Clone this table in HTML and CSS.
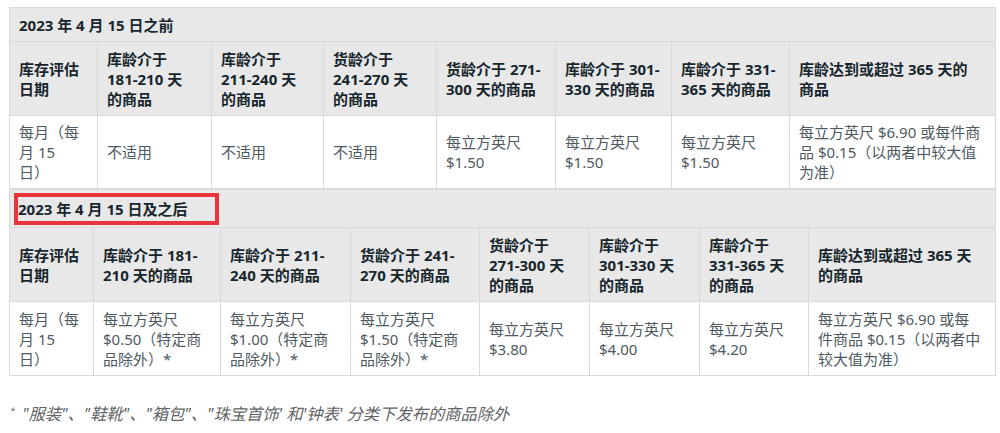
FILE: index.html
```html
<!DOCTYPE html>
<html lang="zh-CN">
<head>
<meta charset="utf-8">
<title>库存仓储超龄附加费</title>
<link rel="stylesheet" href="styles.css">
</head>
<body>
<div class="page">
  <table class="fee t1">
    <colgroup>
      <col class="a1"><col class="a2"><col class="a3"><col class="a4"><col class="a5"><col class="a6"><col class="a7"><col class="a8">
    </colgroup>
    <tr class="title-row"><th colspan="8">2023 年 4 月 15 日之前</th></tr>
    <tr class="head-row">
      <th>库存评估<br>日期</th>
      <th>库龄介于<br>181-210 天<br>的商品</th>
      <th>库龄介于<br>211-240 天<br>的商品</th>
      <th>货龄介于<br>241-270 天<br>的商品</th>
      <th>货龄介于 271-<br>300 天的商品</th>
      <th>库龄介于 301-<br>330 天的商品</th>
      <th>库龄介于 331-<br>365 天的商品</th>
      <th>库龄达到或超过 365 天的<br>商品</th>
    </tr>
    <tr class="body-row">
      <td>每月（每<br>月 15<br>日）</td>
      <td>不适用</td>
      <td>不适用</td>
      <td>不适用</td>
      <td>每立方英尺<br>$1.50</td>
      <td>每立方英尺<br>$1.50</td>
      <td>每立方英尺<br>$1.50</td>
      <td>每立方英尺 $6.90 或每件商<br>品 $0.15（以两者中较大值<br>为准）</td>
    </tr>
  </table>
  <table class="fee t2">
    <colgroup>
      <col class="b1"><col class="b2"><col class="b3"><col class="b4"><col class="b5"><col class="b6"><col class="b7"><col class="b8">
    </colgroup>
    <tr class="title-row2"><th colspan="8"><span class="mark">2023 年 4 月 15 日及之后</span></th></tr>
    <tr class="head-row">
      <th>库存评估<br>日期</th>
      <th>库龄介于 181-<br>210 天的商品</th>
      <th>库龄介于 211-<br>240 天的商品</th>
      <th>货龄介于 241-<br>270 天的商品</th>
      <th>货龄介于<br>271-300 天<br>的商品</th>
      <th>库龄介于<br>301-330 天<br>的商品</th>
      <th>库龄介于<br>331-365 天<br>的商品</th>
      <th>库龄达到或超过 365 天<br>的商品</th>
    </tr>
    <tr class="body-row2">
      <td>每月（每<br>月 15<br>日）</td>
      <td>每立方英尺<br>$0.50（特定商<br>品除外）*</td>
      <td>每立方英尺<br>$1.00（特定商<br>品除外）*</td>
      <td>每立方英尺<br>$1.50（特定商<br>品除外）*</td>
      <td>每立方英尺<br>$3.80</td>
      <td>每立方英尺<br>$4.00</td>
      <td>每立方英尺<br>$4.20</td>
      <td>每立方英尺 $6.90 或每<br>件商品 $0.15（以两者中<br>较大值为准）</td>
    </tr>
  </table>
  <p class="note"><sup>*</sup> "服装"、"鞋靴"、"箱包"、"珠宝首饰' 和'钟表' 分类下发布的商品除外</p>
</div>
</body>
</html>
```

FILE: styles.css
```css
html, body {
  margin: 0;
  padding: 0;
  background: #ffffff;
}

.page {
  padding: 7px 5px 0 9px;
  font-family: "Noto Sans", "Noto Sans CJK SC", sans-serif;
  font-size: 15px;
  line-height: 20px;
}

.fee {
  border-collapse: collapse;
  table-layout: fixed;
  width: 986px;
}

.fee th,
.fee td {
  border: 1px solid #dadada;
  padding: 0 9px;
  text-align: left;
  vertical-align: middle;
  white-space: nowrap;
}

.fee th {
  background: #e8e8e8;
  color: #17262d;
  font-weight: 700;
}

.fee td {
  background: #ffffff;
  color: #4e5a5f;
  font-weight: 400;
}

.title-row th { height: 33px; }
.head-row th { height: 73px; }
.body-row td { height: 72px; }
.body-row2 td { height: 73px; }

.title-row2 th {
  height: 36px;
  padding: 1px 0 0 4px;
}

.mark {
  display: inline-block;
  border: 4px solid #e8343b;
  padding: 2px 27px 2px 0;
  line-height: 20px;
}

.a1 { width: 88px; }
.a2 { width: 114px; }
.a3 { width: 112px; }
.a4 { width: 113px; }
.a5 { width: 119px; }
.a6 { width: 116px; }
.a7 { width: 118px; }
.a8 { width: 206px; }

.b1 { width: 84px; }
.b2 { width: 127px; }
.b3 { width: 130px; }
.b4 { width: 129px; }
.b5 { width: 110px; }
.b6 { width: 110px; }
.b7 { width: 109px; }
.b8 { width: 187px; }

.note {
  margin: 28px 0 0 1px;
  font-size: 16.3px;
  font-style: italic;
  color: #5f6466;
  line-height: 20px;
}

.note sup {
  font-size: 9px;
  vertical-align: 6px;
  line-height: 0;
  margin-right: 3px;
}
```
